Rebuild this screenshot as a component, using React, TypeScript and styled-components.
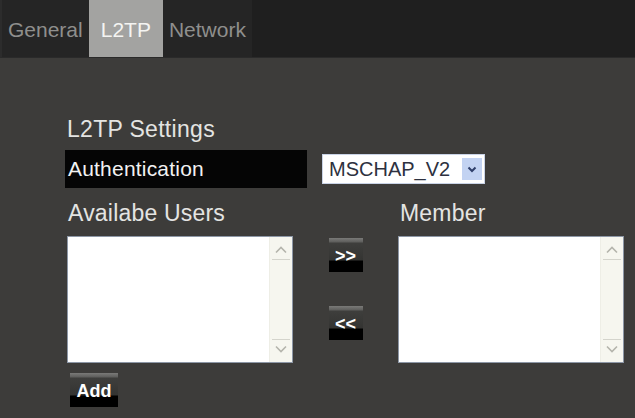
import React from "react";
import styled, { createGlobalStyle } from "styled-components";

const GlobalStyle = createGlobalStyle`
  html, body {
    margin: 0;
    padding: 0;
    background: #3d3c3a;
  }
  body {
    font-family: "Liberation Sans", Arial, sans-serif;
  }
`;

const Page = styled.div`
  width: 635px;
  height: 418px;
  background: #3d3c3a;
  overflow: hidden;
`;

const TabBar = styled.div`
  display: flex;
  height: 58px;
  background: #1f1f1f;
  border-left: 2px solid #2c2c2c;
  border-bottom: 1px solid #2a2a2a;
  box-sizing: border-box;
`;

const Tab = styled.div<{ $active?: boolean }>`
  display: flex;
  align-items: center;
  padding: 2px ${(p) => (p.$active ? "12px" : "6px")} 0;
  background: ${(p) => (p.$active ? "#a3a3a1" : "#252525")};
  color: ${(p) => (p.$active ? "#f4f4f2" : "#8f8f8d")};
  font-size: 21px;
`;

const Content = styled.div`
  padding: 58px 0 0 65px;
`;

const Title = styled.div`
  color: #e4e4e2;
  font-size: 23px;
  line-height: 27px;
  margin-left: 2px;
  letter-spacing: 0.3px;
`;

const AuthRow = styled.div`
  display: flex;
  align-items: center;
  gap: 15px;
  margin-top: 7px;
`;

const AuthLabel = styled.div`
  width: 242px;
  height: 38px;
  background: #050505;
  color: #f2f2f2;
  font-size: 21px;
  display: flex;
  align-items: center;
  padding-left: 3px;
  box-sizing: border-box;
  letter-spacing: 0.2px;
`;

const SelectBox = styled.div`
  width: 163px;
  height: 30px;
  box-sizing: border-box;
  background: #ffffff;
  border: 1px solid #c9d3e6;
  display: flex;
  align-items: center;
  justify-content: space-between;
  padding: 0 2px 0 6px;
`;

const SelectText = styled.span`
  color: #2d3140;
  font-size: 20px;
`;

const SelectArrow = styled.span`
  width: 20px;
  height: 22px;
  background: #c3d3f2;
  display: flex;
  align-items: center;
  justify-content: center;
`;

const ListGrid = styled.div`
  display: grid;
  grid-template-columns: 226px 105px 226px;
  margin: 12px 0 0 2px;
`;

const ListLabel = styled.div<{ $col: number }>`
  grid-column: ${(p) => p.$col};
  color: #e4e4e2;
  font-size: 23px;
  line-height: 27px;
  padding-left: ${(p) => (p.$col === 1 ? 1 : 2)}px;
  margin-bottom: 9px;
  letter-spacing: 0.2px;
`;

const ListBox = styled.div`
  height: 127px;
  background: #ffffff;
  border: 1px solid #8d97a6;
  box-sizing: border-box;
  display: flex;
  justify-content: flex-end;
`;

const ScrollTrack = styled.div`
  width: 22px;
  background: #f6f6ef;
  border-left: 1px solid #eeeee6;
  display: flex;
  flex-direction: column;
  justify-content: space-between;
  align-items: center;
  padding: 4px 0;
`;

const ScrollButton = styled.div<{ $down?: boolean }>`
  width: 18px;
  height: 18px;
  display: flex;
  align-items: center;
  justify-content: center;
  border-${(p) => (p.$down ? "top" : "bottom")}: 1px solid #d4d4cc;
`;

const MoveColumn = styled.div`
  display: flex;
  flex-direction: column;
  align-items: center;
  gap: 34px;
  padding-top: 2px;
`;

const DarkButton = styled.div<{ $w: number }>`
  width: ${(p) => p.$w}px;
  height: 34px;
  box-sizing: border-box;
  background: linear-gradient(
    #7a7a78 0px,
    #5e5e5c 4px,
    #3e3e3c 5px,
    #343432 22px,
    #000 23px,
    #000 100%
  );
  color: #ffffff;
  font-size: 18px;
  font-weight: bold;
  display: flex;
  justify-content: center;
  align-items: flex-start;
  padding-top: 10px;
  line-height: 16px;
`;

const AddButton = styled(DarkButton)`
  margin: 10px 0 0 5px;
`;

const Chevron: React.FC<{ down?: boolean }> = ({ down }) => (
  <svg width="12" height="8" viewBox="0 0 12 8">
    <path
      d={down ? "M1 1.5 L6 6.5 L11 1.5" : "M1 6.5 L6 1.5 L11 6.5"}
      fill="none"
      stroke="#b4b4ac"
      strokeWidth="1.6"
    />
  </svg>
);

const List: React.FC = () => (
  <ListBox>
    <ScrollTrack>
      <ScrollButton>
        <Chevron />
      </ScrollButton>
      <ScrollButton $down>
        <Chevron down />
      </ScrollButton>
    </ScrollTrack>
  </ListBox>
);

const tabs = ["General", "L2TP", "Network"];

export default function App() {
  return (
    <Page>
      <GlobalStyle />
      <TabBar>
        {tabs.map((t) => (
          <Tab key={t} $active={t === "L2TP"}>
            {t}
          </Tab>
        ))}
      </TabBar>
      <Content>
        <Title>L2TP Settings</Title>
        <AuthRow>
          <AuthLabel>Authentication</AuthLabel>
          <SelectBox>
            <SelectText>MSCHAP_V2</SelectText>
            <SelectArrow>
              <svg width="10" height="7" viewBox="0 0 10 7">
                <path d="M1.5 1.5 L5 5 L8.5 1.5" fill="none" stroke="#2f3f6a" strokeWidth="2" />
              </svg>
            </SelectArrow>
          </SelectBox>
        </AuthRow>
        <ListGrid>
          <ListLabel $col={1}>Availabe Users</ListLabel>
          <ListLabel $col={3}>Member</ListLabel>
          <List />
          <MoveColumn>
            <DarkButton $w={34}>&gt;&gt;</DarkButton>
            <DarkButton $w={34}>&lt;&lt;</DarkButton>
          </MoveColumn>
          <List />
        </ListGrid>
        <AddButton $w={48}>Add</AddButton>
      </Content>
    </Page>
  );
}
